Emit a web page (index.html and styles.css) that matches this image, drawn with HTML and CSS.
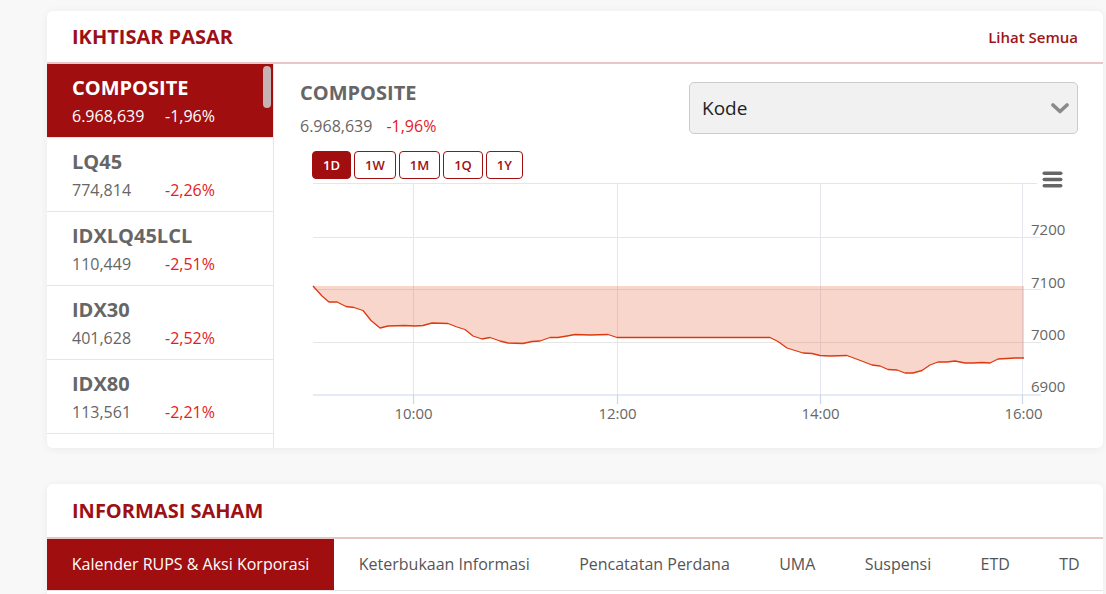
FILE: index.html
```html
<!DOCTYPE html>
<html lang="id">
<head>
<meta charset="utf-8">
<title>Ikhtisar Pasar</title>
<link rel="stylesheet" href="styles.css">
</head>
<body>
<div class="page">
  <section class="card">
    <header class="card-head">
      <h2 class="card-title">IKHTISAR PASAR</h2>
      <a class="see-all" href="#">Lihat Semua</a>
    </header>
    <div class="market-body">
      <div class="index-list">
        <div class="index-item active">
          <div class="idx-name">COMPOSITE</div>
          <div class="idx-vals"><span class="idx-val">6.968,639</span><span class="idx-chg">-1,96%</span></div>
        </div>
        <div class="index-item">
          <div class="idx-name">LQ45</div>
          <div class="idx-vals"><span class="idx-val">774,814</span><span class="idx-chg">-2,26%</span></div>
        </div>
        <div class="index-item">
          <div class="idx-name">IDXLQ45LCL</div>
          <div class="idx-vals"><span class="idx-val">110,449</span><span class="idx-chg">-2,51%</span></div>
        </div>
        <div class="index-item">
          <div class="idx-name">IDX30</div>
          <div class="idx-vals"><span class="idx-val">401,628</span><span class="idx-chg">-2,52%</span></div>
        </div>
        <div class="index-item">
          <div class="idx-name">IDX80</div>
          <div class="idx-vals"><span class="idx-val">113,561</span><span class="idx-chg">-2,21%</span></div>
        </div>
        <div class="scroll-thumb"></div>
      </div>
      <div class="chart-panel">
        <div class="panel-head">
          <div class="panel-info">
            <div class="panel-name">COMPOSITE</div>
            <div class="panel-vals"><span>6.968,639</span><span class="chg">-1,96%</span></div>
          </div>
          <div class="select">
            <span>Kode</span>
            <svg class="chevron" width="18" height="11" viewBox="0 0 18 11"><polyline points="2,2 9,8.5 16,2" fill="none" stroke="#8a8a8a" stroke-width="3.6" stroke-linecap="round" stroke-linejoin="round"/></svg>
          </div>
        </div>
        <div class="chart">
          <div class="ranges">
            <button class="range active">1D</button>
            <button class="range">1W</button>
            <button class="range">1M</button>
            <button class="range">1Q</button>
            <button class="range">1Y</button>
          </div>
          <svg class="menu-icon" width="21" height="17" viewBox="0 0 21 17">
            <rect x="0.5" y="0.5" width="20" height="3.6" rx="1.8" fill="#666"/>
            <rect x="0.5" y="6.7" width="20" height="3.6" rx="1.8" fill="#666"/>
            <rect x="0.5" y="12.9" width="20" height="3.6" rx="1.8" fill="#666"/>
          </svg>
          <svg class="plot" width="778" height="250" viewBox="300 180 778 250">
            <g stroke="#e6e6e6" stroke-width="1">
              <line x1="313" y1="184.5" x2="1037" y2="184.5"/>
              <line x1="313" y1="238.5" x2="1041" y2="238.5"/>
              <line x1="313" y1="290.5" x2="1041" y2="290.5"/>
              <line x1="313" y1="343.5" x2="1041" y2="343.5"/>
            </g>
            <g stroke="#e3e6ef" stroke-width="1">
              <line x1="413.5" y1="184" x2="413.5" y2="396"/>
              <line x1="617.5" y1="184" x2="617.5" y2="396"/>
              <line x1="820.5" y1="184" x2="820.5" y2="396"/>
              <line x1="1022.5" y1="184" x2="1022.5" y2="396"/>
            </g>
            <polygon fill="#e0542a" fill-opacity="0.24" points="313,287 322,297 329,303 337,303 346,307.5 354,308.5 363,311.5 371,321.5 380,329 388,327 405,326.5 415,327 423,326.5 432,324 448,324.5 457,328 465,330.5 473,337 482,340 490,338.5 500,342 508,344 523,344.5 532,342.5 540,342 550,338.5 558,338.5 567,337 575,335.5 590,336 608,335.5 617,338.5 770,338.5 778,342.5 787,349 795,351.5 803,354 812,354.5 820,356.5 830,357 847,356.5 855,359.5 863,362.5 872,366 880,367 888,370.5 897,371 905,374 913,374 922,371.5 930,366 938,363 947,363 955,362 965,364 973,364 982,363.5 990,364 998,360 1007,359.5 1015,359 1024,359 1024,287"/>
            <polyline fill="none" stroke="#dd3a10" stroke-width="1.3" stroke-linejoin="round" points="313,287 322,297 329,303 337,303 346,307.5 354,308.5 363,311.5 371,321.5 380,329 388,327 405,326.5 415,327 423,326.5 432,324 448,324.5 457,328 465,330.5 473,337 482,340 490,338.5 500,342 508,344 523,344.5 532,342.5 540,342 550,338.5 558,338.5 567,337 575,335.5 590,336 608,335.5 617,338.5 770,338.5 778,342.5 787,349 795,351.5 803,354 812,354.5 820,356.5 830,357 847,356.5 855,359.5 863,362.5 872,366 880,367 888,370.5 897,371 905,374 913,374 922,371.5 930,366 938,363 947,363 955,362 965,364 973,364 982,363.5 990,364 998,360 1007,359.5 1015,359 1024,359"/>
            <g stroke="#ccd6eb" stroke-width="1.2">
              <line x1="313" y1="396" x2="1041" y2="396"/>
              <line x1="413.5" y1="396" x2="413.5" y2="405"/>
              <line x1="617.5" y1="396" x2="617.5" y2="405"/>
              <line x1="820.5" y1="396" x2="820.5" y2="405"/>
              <line x1="1022.5" y1="396" x2="1022.5" y2="405"/>
            </g>
            <g class="axis-label" text-anchor="middle">
              <text x="413.5" y="419.5">10:00</text>
              <text x="617.5" y="419.5">12:00</text>
              <text x="820.5" y="419.5">14:00</text>
              <text x="1023.5" y="419.5">16:00</text>
            </g>
            <g class="axis-label">
              <text x="1031" y="235.5">7200</text>
              <text x="1031" y="288.5">7100</text>
              <text x="1031" y="340.5">7000</text>
              <text x="1031" y="393">6900</text>
            </g>
          </svg>
        </div>
      </div>
    </div>
  </section>

  <section class="card info">
    <header class="card-head head-info">
      <h2 class="card-title">INFORMASI SAHAM</h2>
    </header>
    <nav class="tabs">
      <span class="tab active">Kalender RUPS &amp; Aksi Korporasi</span>
      <span class="tab">Keterbukaan Informasi</span>
      <span class="tab">Pencatatan Perdana</span>
      <span class="tab">UMA</span>
      <span class="tab">Suspensi</span>
      <span class="tab">ETD</span>
      <span class="tab">TD</span>
    </nav>
    <div class="info-body"></div>
  </section>
</div>
</body>
</html>
```

FILE: styles.css
```css
html, body {
  margin: 0;
  background: #f8f8f8;
  font-family: "Open Sans", "Liberation Sans", sans-serif;
}

.page {
  padding: 11px 3px 0 47px;
  display: flex;
  flex-direction: column;
  gap: 36px;
}

.card {
  background: #fff;
  border-radius: 6px;
  box-shadow: 0 1px 8px rgba(0, 0, 0, 0.06);
  overflow: hidden;
}

.card-head {
  height: 51px;
  border-bottom: 2px solid #e9c6c6;
  display: flex;
  align-items: center;
  justify-content: space-between;
  padding: 0 25px;
}

.head-info {
  height: 53px;
}

.card-title {
  margin: 0;
  font-size: 20px;
  font-weight: 700;
  line-height: 27px;
  color: #9d1015;
}

.see-all {
  font-size: 15px;
  font-weight: 600;
  color: #a01317;
  text-decoration: none;
}

.market-body {
  display: flex;
  height: 384px;
}

.index-list {
  position: relative;
  flex: none;
  width: 226px;
  border-right: 1px solid #e6e6e6;
  overflow: hidden;
}

.index-item {
  box-sizing: border-box;
  height: 74px;
  border-bottom: 1px solid #e6e6e6;
  padding: 10px 0 0 25px;
}

.idx-name {
  font-size: 20px;
  font-weight: 700;
  line-height: 27px;
  color: #666;
}

.idx-vals {
  margin-top: 4px;
  display: flex;
  font-size: 16px;
  line-height: 22px;
  color: #666;
}

.idx-val {
  width: 93px;
}

.idx-chg {
  color: #e31b23;
}

.index-item.active {
  background: #a00e10;
}

.index-item.active .idx-name,
.index-item.active .idx-vals,
.index-item.active .idx-chg {
  color: #fff;
}

.scroll-thumb {
  position: absolute;
  top: 2px;
  right: 2px;
  width: 8px;
  height: 42px;
  border-radius: 4px;
  background: #c6b3b3;
}

.chart-panel {
  flex: 1;
  min-width: 0;
  padding: 15px 25px 0 26px;
}

.panel-head {
  display: flex;
  justify-content: space-between;
  align-items: flex-start;
}

.panel-name {
  font-size: 20px;
  font-weight: 700;
  line-height: 27px;
  color: #666;
}

.panel-vals {
  margin-top: 9px;
  font-size: 16px;
  line-height: 22px;
  color: #666;
}

.panel-vals .chg {
  margin-left: 14px;
  color: #e31b23;
}

.select {
  margin-top: 3px;
  box-sizing: border-box;
  width: 389px;
  height: 52px;
  border: 1px solid #cbcbcb;
  border-radius: 5px;
  background: #f1f1f1;
  display: flex;
  align-items: center;
  justify-content: space-between;
  padding: 0 8px 0 12px;
  font-size: 19px;
  color: #222;
}

.chevron {
  display: block;
}

.chart {
  position: relative;
  margin-top: 14px;
}

.ranges {
  display: flex;
  gap: 3px;
  margin-left: 12px;
}

.range {
  height: 28px;
  padding: 0 10px;
  border: 1px solid #a00e10;
  border-radius: 4px;
  background: #fff;
  color: #a00e10;
  font-family: "Open Sans", sans-serif;
  font-size: 13px;
  font-weight: 600;
}

.range.active {
  background: #a00e10;
  color: #fff;
}

.menu-icon {
  position: absolute;
  top: 20px;
  right: 15px;
}

.plot {
  display: block;
}

.axis-label text {
  font-family: "Open Sans", sans-serif;
  font-size: 15px;
  fill: #666;
}

.tabs {
  display: flex;
  border-bottom: 1px solid #e3e3e3;
}

.tab {
  padding: 0 24.7px;
  line-height: 51px;
  font-size: 16px;
  color: #555;
  white-space: nowrap;
}

.tab.active {
  background: #a00e10;
  color: #fff;
}

.info-body {
  height: 200px;
}
```
